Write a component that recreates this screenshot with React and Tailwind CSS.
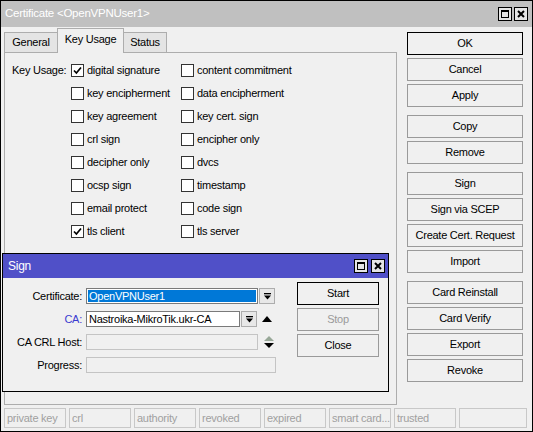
import React from "react";

function Check() {
  return (
    <svg width="9" height="9" viewBox="0 0 9 9">
      <path d="M1 4.5 L3.4 7 L8 1.5" fill="none" stroke="#000" strokeWidth="1.7" />
    </svg>
  );
}

function Box({ checked }) {
  return (
    <div className="w-[13px] h-[13px] border border-[#333] bg-white flex items-center justify-center shrink-0">
      {checked ? <Check /> : null}
    </div>
  );
}

function Item({ label, checked }) {
  return (
    <div className="h-[23px] flex items-center">
      <Box checked={checked} />
      <span className="ml-[3px]">{label}</span>
    </div>
  );
}

function WinBtn({ kind, size = "w-[14px] h-[14px]" }) {
  return (
    <div className={`${size} border border-black bg-[#e6e6e6] flex items-center justify-center`}>
      {kind === "max" ? (
        <div className="w-[8px] h-[8px] border border-black border-t-2" />
      ) : (
        <svg width="8" height="8" viewBox="0 0 8 8">
          <path d="M1 1 L7 7 M7 1 L1 7" stroke="#000" strokeWidth="2" />
        </svg>
      )}
    </div>
  );
}

function Btn({ children, def, disabled }) {
  return (
    <div
      className={`h-[23px] w-full flex items-center justify-center border ${
        def ? "border-black" : "border-[#9a9a9a]"
      } ${disabled ? "text-[#9a9a9a]" : "text-black"} bg-[#f0f0f0]`}
    >
      {children}
    </div>
  );
}

function DropIcon() {
  return (
    <svg width="9" height="9" viewBox="0 0 9 9">
      <rect x="1" y="1" width="7" height="1.3" fill="#000" />
      <path d="M1 3.5 H8 L4.5 7.5 Z" fill="#000" />
    </svg>
  );
}

function DropBtn() {
  return (
    <div className="w-[16px] h-[16px] border border-[#adadad] bg-[#e8e8e8] flex items-center justify-center shrink-0">
      <DropIcon />
    </div>
  );
}

const groups = [
  ["OK", "Cancel", "Apply"],
  ["Copy", "Remove"],
  ["Sign", "Sign via SCEP", "Create Cert. Request", "Import"],
  ["Card Reinstall", "Card Verify", "Export", "Revoke"],
];

const col1 = [
  ["digital signature", true],
  ["key encipherment"],
  ["key agreement"],
  ["crl sign"],
  ["decipher only"],
  ["ocsp sign"],
  ["email protect"],
  ["tls client", true],
];
const col2 = [
  ["content commitment"],
  ["data encipherment"],
  ["key cert. sign"],
  ["encipher only"],
  ["dvcs"],
  ["timestamp"],
  ["code sign"],
  ["tls server"],
];

const status = ["private key", "crl", "authority", "revoked", "expired", "smart card...", "trusted"];

export default function App() {
  return (
    <div className="relative w-[533px] h-[432px] bg-[#f0f0f0] border border-black overflow-hidden font-['Liberation_Sans',Arial,sans-serif] text-[11px] tracking-[-0.25px] text-black flex flex-col leading-none">
      {/* Title bar */}
      <div className="h-[26px] bg-[#c0c0c0] flex items-center pl-[4px] pr-[4px] shrink-0">
        <span className="text-white text-[11.5px]">Certificate &lt;OpenVPNUser1&gt;</span>
        <div className="ml-auto flex gap-[2px]">
          <WinBtn kind="max" />
          <WinBtn kind="close" />
        </div>
      </div>

      {/* Body */}
      <div className="flex pl-[3px] pt-[1px] shrink-0">
        <div className="w-[393px] flex flex-col">
          <div className="flex items-end h-[24px]">
            <div className="w-[53px] h-[20px] border-l border-t border-[#adadad] bg-[#e4e4e4] flex items-center justify-center">
              General
            </div>
            <div className="relative z-10 w-[67px] h-[25px] -mb-px border-l border-t border-r border-[#adadad] bg-[#f0f0f0] flex items-center justify-center pb-[3px]">
              Key Usage
            </div>
            <div className="w-[43px] h-[20px] border-t border-r border-[#adadad] bg-[#e4e4e4] flex items-center justify-center">
              Status
            </div>
          </div>
          <div className="h-[353px] border border-[#adadad] pt-[6px] pl-[7px] flex">
            <div className="w-[59px] h-[23px] flex items-center">Key Usage:</div>
            <div className="grid grid-cols-[110px_auto]">
              <div className="flex flex-col">
                {col1.map(([l, c]) => (
                  <Item key={l} label={l} checked={c} />
                ))}
              </div>
              <div className="flex flex-col">
                {col2.map(([l, c]) => (
                  <Item key={l} label={l} checked={c} />
                ))}
              </div>
            </div>
          </div>
        </div>
        <div className="ml-[10px] w-[116px] pt-[4px] flex flex-col gap-[8px]">
          {groups.map((g, i) => (
            <div key={i} className="flex flex-col gap-[3px]">
              {g.map((b) => (
                <Btn key={b} def={b === "OK"}>
                  {b}
                </Btn>
              ))}
            </div>
          ))}
        </div>
      </div>

      {/* Status bar */}
      <div className="mt-[3px] h-[20px] flex gap-[3px] pl-[3px] pr-[5px] text-[#a0a0a0]">
        {status.map((s) => (
          <div key={s} className="w-[62px] h-full border border-[#c8c8c8] flex items-center pl-[2px] whitespace-nowrap overflow-hidden">
            {s}
          </div>
        ))}
        <div className="flex-1 h-full border border-[#c8c8c8]" />
      </div>

      {/* Sign dialog */}
      <div className="absolute left-[1px] top-[252px] w-[387px] h-[139px] border border-black bg-[#f0f0f0] flex flex-col">
        <div className="h-[24px] bg-[#5050c8] flex items-center pl-[5px] pr-[3px] shrink-0">
          <span className="text-white text-[12px]">Sign</span>
          <div className="ml-auto flex gap-[3px]">
            <WinBtn kind="max" size="w-[14px] h-[14px]" />
            <WinBtn kind="close" size="w-[14px] h-[14px]" />
          </div>
        </div>
        <div className="flex">
          <div className="w-[294px] pt-[10px] flex flex-col gap-[7px]">
            <div className="h-[16px] flex items-center">
              <div className="w-[79px] text-right">Certificate:</div>
              <div className="ml-[4px] w-[172px] h-[16px] border border-[#7a7a7a] bg-white p-[1px]">
                <div className="h-full bg-[#0078d7] text-white flex items-center pl-[1px]">OpenVPNUser1</div>
              </div>
              <div className="ml-[1px]">
                <DropBtn />
              </div>
            </div>
            <div className="h-[16px] flex items-center">
              <div className="w-[79px] text-right text-[#3a3ad0]">CA:</div>
              <div className="ml-[4px] w-[154px] h-[16px] border border-[#7a7a7a] bg-white flex items-center pl-[2px]">
                Nastroika-MikroTik.ukr-CA
              </div>
              <div className="ml-[1px]">
                <DropBtn />
              </div>
              <svg className="ml-[5px]" width="10" height="6" viewBox="0 0 10 6">
                <path d="M0 6 L5 0 L10 6 Z" fill="#000" />
              </svg>
            </div>
            <div className="h-[16px] flex items-center">
              <div className="w-[79px] text-right">CA CRL Host:</div>
              <div className="ml-[4px] w-[172px] h-[16px] border border-[#c4c4c4] bg-[#f0f0f0]" />
              <svg className="ml-[6px]" width="10" height="14" viewBox="0 0 10 14">
                <path d="M0 6 L5 1 L10 6 Z" fill="#98a898" />
                <path d="M0 8 L10 8 L5 13 Z" fill="#000" />
              </svg>
            </div>
            <div className="h-[16px] flex items-center">
              <div className="w-[79px] text-right">Progress:</div>
              <div className="ml-[4px] w-[190px] h-[16px] border border-[#c4c4c4] bg-[#f0f0f0]" />
            </div>
          </div>
          <div className="w-[82px] pt-[4px] flex flex-col gap-[3px]">
            <Btn def>Start</Btn>
            <Btn disabled>Stop</Btn>
            <Btn>Close</Btn>
          </div>
        </div>
      </div>
    </div>
  );
}
